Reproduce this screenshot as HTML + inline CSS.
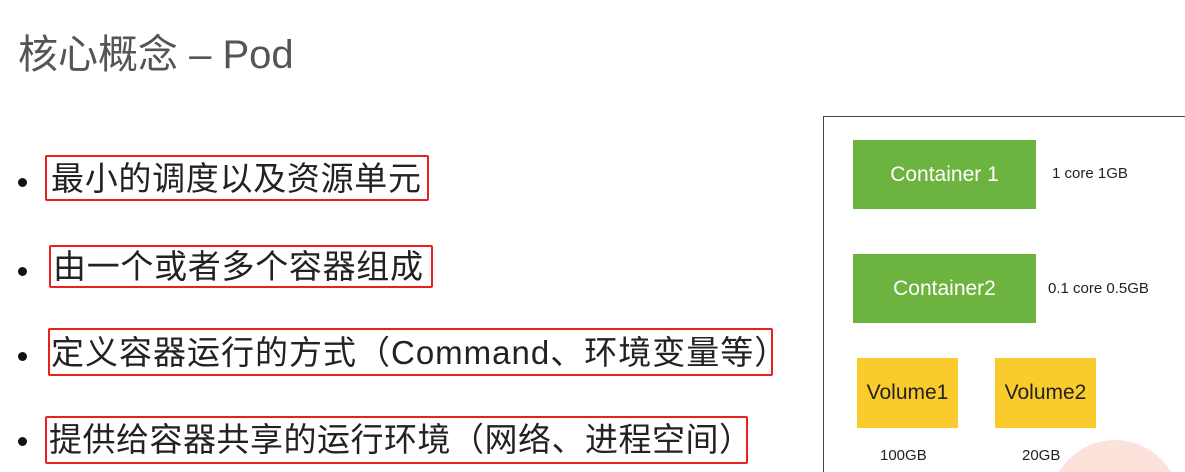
<!DOCTYPE html>
<html><head><meta charset="utf-8"><style>
html,body{margin:0;width:1185px;height:472px;overflow:hidden}
body{background:#fff;position:relative;font-family:"Liberation Sans","Noto Sans CJK SC",sans-serif;}
.a{position:absolute;white-space:nowrap}
.t{left:18px;top:22px;font-size:40px;color:#555;}
.dot{width:9px;height:9px;border-radius:50%;background:#111;position:absolute;left:18px}
.bx{position:absolute;border:2px solid #e8211e;border-radius:2px;box-sizing:border-box}
.li{font-size:33px;color:#222;line-height:1}
.g{position:absolute;background:#6db33f;color:#fff;font-size:21px;display:flex;align-items:center;justify-content:center}
.y{position:absolute;background:#f9cb2c;color:#222;font-size:21px;display:flex;align-items:center;justify-content:center}
.s{font-size:15px;color:#222}
.clip{position:absolute;left:0;top:0;width:1185px;height:472px;overflow:hidden}
</style></head><body>
<div class="clip">
<div style="position:absolute;left:1050px;top:440px;width:130px;height:130px;border-radius:50%;background:#fbe3dc"></div>
<div style="position:absolute;left:823px;top:116px;width:400px;height:400px;border:1.5px solid #444;box-sizing:border-box"></div>
</div>
<div class="a t">核心概念 – Pod</div>
<div class="dot" style="top:178px"></div>
<div class="dot" style="top:267px"></div>
<div class="dot" style="top:352px"></div>
<div class="dot" style="top:437px"></div>
<div class="bx" style="left:45px;top:155px;width:384px;height:46px"></div>
<div class="bx" style="left:49px;top:245px;width:384px;height:43px"></div>
<div class="bx" style="left:48px;top:328px;width:725px;height:48px"></div>
<div class="bx" style="left:45px;top:416px;width:703px;height:48px"></div>
<div class="a li" style="left:51px;top:162px;letter-spacing:0.7px">最小的调度以及资源单元</div>
<div class="a li" style="left:53px;top:250px;letter-spacing:0.7px">由一个或者多个容器组成</div>
<div class="a li" style="left:51px;top:336px;letter-spacing:1px">定义容器运行的方式（Command、环境变量等）</div>
<div class="a li" style="left:49px;top:423px;letter-spacing:0.5px">提供给容器共享的运行环境（网络、进程空间）</div>
<div class="g" style="left:853px;top:140px;width:183px;height:69px">Container 1</div>
<div class="g" style="left:853px;top:254px;width:183px;height:69px">Container2</div>
<div class="a s" style="left:1052px;top:165px">1 core 1GB</div>
<div class="a s" style="left:1048px;top:280px">0.1 core 0.5GB</div>
<div class="y" style="left:857px;top:358px;width:101px;height:70px">Volume1</div>
<div class="y" style="left:995px;top:358px;width:101px;height:70px">Volume2</div>
<div class="a s" style="left:880px;top:447px">100GB</div>
<div class="a s" style="left:1022px;top:447px">20GB</div>
</body></html>
